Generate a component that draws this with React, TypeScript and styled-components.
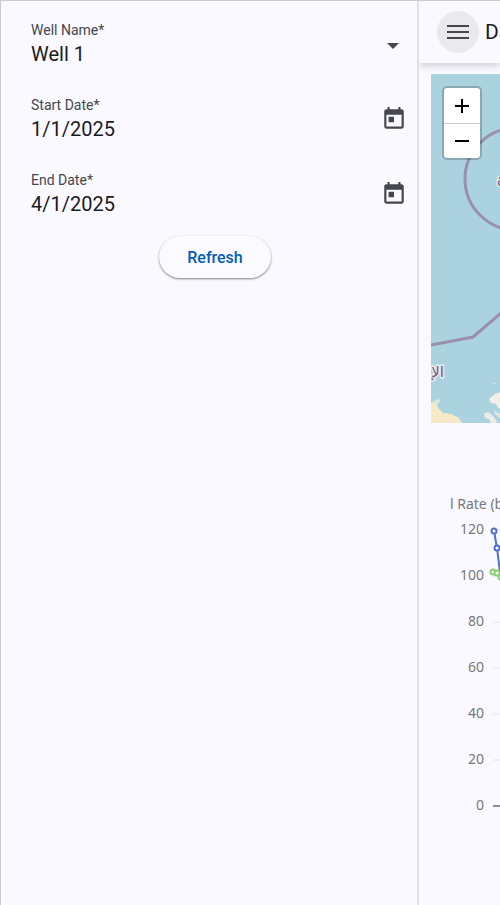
import React, { useState } from "react";
import styled, { createGlobalStyle } from "styled-components";

const GlobalStyle = createGlobalStyle`
  *, *::before, *::after { box-sizing: border-box; }
  body {
    margin: 0;
    background: #faf9fd;
    color: #1a1b1f;
    font-family: Roboto, "Liberation Sans", sans-serif;
    overflow: hidden;
  }
`;

const Shell = styled.div`
  display: flex;
  min-height: 100vh;
  background: #faf9ff;
  border: solid #cccccf;
  border-width: 1px 0 0 1px;
`;

const Drawer = styled.aside`
  flex: 0 0 418px;
  border-right: 2px solid #e2e2e6;
  padding: 19px 0 0 16px;
`;

const Form = styled.form`
  display: flex;
  flex-direction: column;
`;

const Field = styled.div`
  display: flex;
  align-items: flex-start;
  justify-content: space-between;
  height: 75px;
  padding: 0 7px 0 14px;
`;

const FieldText = styled.div`
  display: flex;
  flex-direction: column;
  flex: 1;
  min-width: 0;
`;

const Label = styled.label`
  font-size: 14px;
  line-height: 20px;
  color: #44474e;
`;

const DateInput = styled.input`
  width: 100%;
  height: 28px;
  padding: 0;
  border: 0;
  outline: 0;
  background: transparent;
  color: #1a1b1f;
  font: 20px/28px Roboto, sans-serif;
`;

const Select = styled.select`
  width: 100%;
  height: 28px;
  padding: 0;
  border: 0;
  outline: 0;
  appearance: none;
  background: transparent;
  color: #1a1b1f;
  font: 20px/28px Roboto, sans-serif;
`;

const ArrowBox = styled.span`
  display: flex;
  padding: 23px 11px 0 0;
  color: #44474e;
`;

const IconButton = styled.button`
  display: flex;
  align-items: center;
  justify-content: center;
  width: 32px;
  height: 48px;
  padding: 0;
  border: 0;
  background: transparent;
  color: #44474e;
  cursor: pointer;
`;

const RefreshButton = styled.button`
  align-self: center;
  height: 42px;
  margin: -9px 4px 0 0;
  padding: 1px 28px 0;
  border: 0;
  border-radius: 21px;
  background: #fbfaff;
  color: #005cbb;
  font: 500 16px/24px Roboto, sans-serif;
  box-shadow: 0 1px 2px rgba(0, 0, 0, 0.4), 0 1px 3px rgba(0, 0, 0, 0.12);
  cursor: pointer;
`;

const Main = styled.main`
  flex: 1;
  min-width: 0;
  overflow: hidden;
`;

const Toolbar = styled.header`
  display: flex;
  align-items: center;
  gap: 6px;
  height: 62px;
  padding-left: 18px;
  background: #faf9ff;
  box-shadow: 0 2px 8px rgba(0, 0, 0, 0.2);
`;

const MenuButton = styled.button`
  display: flex;
  flex: none;
  align-items: center;
  justify-content: center;
  width: 42px;
  height: 42px;
  padding: 0;
  border: 0;
  border-radius: 50%;
  background: #eae9ee;
  color: #44474e;
  cursor: pointer;
`;

const Title = styled.h1`
  margin: 0;
  font-size: 21px;
  line-height: 28px;
  font-weight: 400;
  white-space: nowrap;
`;

const Content = styled.div`
  padding: 11px 0 0 12px;
`;

const MapPane = styled.section`
  position: relative;
  height: 349px;
  overflow: hidden;
  background: #aad3df;
`;

const ZoomControl = styled.div`
  position: absolute;
  top: 12px;
  left: 11px;
  display: flex;
  flex-direction: column;
  border: 2px solid rgba(0, 0, 0, 0.2);
  border-radius: 5px;
  background: #fff;
  background-clip: padding-box;
`;

const ZoomButton = styled.button`
  display: flex;
  align-items: center;
  justify-content: center;
  width: 36px;
  height: 35px;
  padding: 0;
  border: 0;
  background: transparent;
  color: #000;
  cursor: pointer;

  & + & {
    border-top: 1px solid #ccc;
  }
`;

const ChartPane = styled.section`
  height: 360px;
  margin-top: 65px;
  overflow: hidden;
`;

const Drawing = styled.svg`
  display: block;
`;

const AxisText = styled.text`
  fill: #77777d;
  font: 14px "Noto Sans", "Open Sans", sans-serif;
`;

const PlaceText = styled.text`
  fill: #795478;
  stroke: #e4e9ef;
  stroke-width: 3px;
  paint-order: stroke;
  font: 15px "DejaVu Sans", sans-serif;
`;

function CalendarIcon() {
  return (
    <svg width="26" height="26" viewBox="0 0 24 24" fill="currentColor" aria-hidden="true">
      <path d="M19 3h-1V1h-2v2H8V1H6v2H5c-1.100 0-2 .9-2 2v14c0 1.100.9 2 2 2h14c1.100 0 2-.9 2-2V5c0-1.100-.9-2-2-2zm0 16H5V8h14v11zM7 10h5v5H7z" />
    </svg>
  );
}

function DateField({ id, label, initial }: { id: string; label: string; initial: string }) {
  const [value, setValue] = useState(initial);
  return (
    <Field>
      <FieldText>
        <Label htmlFor={id}>{label}*</Label>
        <DateInput id={id} value={value} onChange={(e) => setValue(e.target.value)} />
      </FieldText>
      <IconButton type="button" aria-label={`Open calendar for ${label}`}>
        <CalendarIcon />
      </IconButton>
    </Field>
  );
}

function MapDrawing() {
  return (
    <Drawing width="349" height="349" viewBox="0 0 349 349" aria-hidden="true">
      <g fill="none" stroke="#9b8fae" strokeWidth="3">
        <circle cx="85" cy="105" r="51" />
        <path d="M0 271L42 263L82 229" />
      </g>
      <path d="M0 329L5 327L9 327L6 331L8 335L12 339L20 340L28 344L31 349H0Z" fill="#f5e9c9" />
      <path d="M1 328L6 325L10 326L5 330Z" fill="#d9e4dc" />
      <path d="M70 318L64 320L58 325L60 329L65 330L67 334L70 335Z" fill="#f2efe9" />
      <path d="M53 340L57 338L62 342L66 347L65 349H60L58 345L54 344Z" fill="#eeece6" />
      <path d="M63 336L70 341V345L64 340Z" fill="#e5e8e4" />
      <path d="M62 309h2v1h-2z" fill="#dce6e4" />
      <PlaceText x="13" y="303" textAnchor="end">الإ</PlaceText>
      <PlaceText x="66" y="112">a</PlaceText>
    </Drawing>
  );
}

const ticks = [120, 100, 80, 60, 40, 20, 0];

function RateChart() {
  return (
    <Drawing width="349" height="360" viewBox="0 0 349 360" role="img" aria-label="Rate chart">
      <AxisText x="19" y="21">l Rate (bbl/d)</AxisText>
      {ticks.map((tick, i) => (
        <g key={tick}>
          <AxisText x="53" y={46 + i * 46} textAnchor="end">{tick}</AxisText>
          <line
            x1="62"
            x2="349"
            y1={42 + i * 46}
            y2={42 + i * 46}
            stroke={tick === 0 ? "#8b8f9b" : "#e0e6f1"}
            strokeWidth={tick === 0 ? 2 : 1}
          />
        </g>
      ))}
      <g fill="#fff" stroke="#5470c6" strokeWidth="2">
        <path d="M63 43L66 60L70 92" fill="none" />
        <circle cx="63" cy="43" r="2.500" />
        <circle cx="66" cy="60" r="2.500" />
      </g>
      <g fill="#fff" stroke="#91cc75" strokeWidth="2">
        <path d="M63 84L67 86L70 89" fill="none" />
        <circle cx="62" cy="84" r="2.500" />
        <circle cx="66" cy="85" r="2.500" />
        <circle cx="70" cy="89" r="2.500" />
      </g>
    </Drawing>
  );
}

export default function App() {
  return (
    <>
      <GlobalStyle />
      <Shell>
        <Drawer>
          <Form onSubmit={(e) => e.preventDefault()}>
            <Field>
              <FieldText>
                <Label htmlFor="well">Well Name*</Label>
                <Select id="well" defaultValue="Well 1">
                  <option>Well 1</option>
                </Select>
              </FieldText>
              <ArrowBox>
                <svg width="12" height="6" viewBox="0 0 12 6" fill="currentColor" aria-hidden="true">
                  <path d="M0 0h12L6 6z" />
                </svg>
              </ArrowBox>
            </Field>
            <DateField id="start" label="Start Date" initial="1/1/2025" />
            <DateField id="end" label="End Date" initial="4/1/2025" />
            <RefreshButton type="submit">Refresh</RefreshButton>
          </Form>
        </Drawer>
        <Main>
          <Toolbar>
            <MenuButton type="button" aria-label="Toggle menu">
              <svg width="22" height="16" viewBox="0 0 22 16" fill="currentColor" aria-hidden="true">
                <path d="M0 1h22v2H0zM0 7h22v2H0zM0 13h22v2H0z" />
              </svg>
            </MenuButton>
            <Title>Dashboard</Title>
          </Toolbar>
          <Content>
            <MapPane>
              <MapDrawing />
              <ZoomControl>
                <ZoomButton type="button" aria-label="Zoom in">
                  <svg width="14" height="14" viewBox="0 0 14 14" fill="currentColor" aria-hidden="true">
                    <path d="M6 0h2v6h6v2H8v6H6V8H0V6h6z" />
                  </svg>
                </ZoomButton>
                <ZoomButton type="button" aria-label="Zoom out">
                  <svg width="14" height="2" viewBox="0 0 14 2" fill="currentColor" aria-hidden="true">
                    <path d="M0 0h14v2H0z" />
                  </svg>
                </ZoomButton>
              </ZoomControl>
            </MapPane>
            <ChartPane>
              <RateChart />
            </ChartPane>
          </Content>
        </Main>
      </Shell>
    </>
  );
}
